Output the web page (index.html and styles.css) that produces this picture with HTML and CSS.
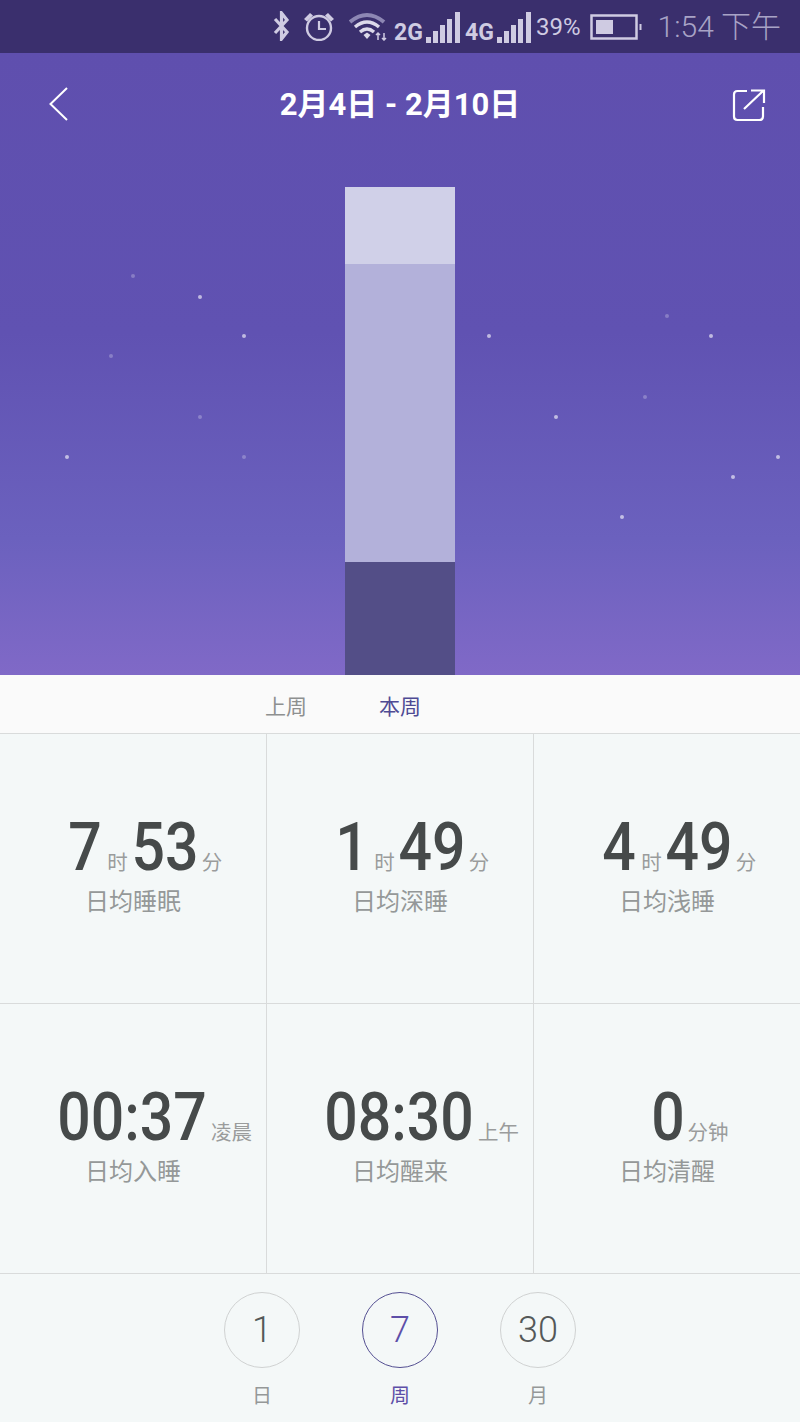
FILE: index.html
```html
<!DOCTYPE html>
<html lang="zh">
<head>
<meta charset="utf-8">
<title>睡眠</title>
<link rel="stylesheet" href="styles.css">
</head>
<body>
<div class="page">
  <div class="statusbar">
    <svg class="ic-bt" width="17" height="30" viewBox="0 0 17 30"><path d="M2 8 L14 21 L8.500 28 L8.500 2 L14 9 L2 22" fill="none" stroke="#cfcbe2" stroke-width="3.200"/></svg>
    <svg class="ic-alarm" width="32" height="29" viewBox="0 0 32 29"><circle cx="16" cy="16" r="12" fill="none" stroke="#cfcbe2" stroke-width="2.400"/><path d="M16 9 V17 H23" fill="none" stroke="#cfcbe2" stroke-width="2.200"/><path d="M1 7 L7 1 L10 3.500 L4 9.500 Z M31 7 L25 1 L22 3.500 L28 9.500 Z" fill="#cfcbe2"/></svg>
    <svg class="ic-wifi" width="40" height="30" viewBox="0 0 40 30"><path d="M1 11 Q18 -3 35 11" fill="none" stroke="#8d87b4" stroke-width="4"/><path d="M6 16 Q18 6 30 16" fill="none" stroke="#dcd9ea" stroke-width="3.400"/><path d="M11 21 Q18 15 25 21" fill="none" stroke="#dcd9ea" stroke-width="3.400"/><path d="M14.500 24 L18 21.500 L21.500 24 L18 28 Z" fill="#dcd9ea"/><path d="M29 22 V29 M27 24 L29 22 L31 24 M35 22 V29 M33 27 L35 29 L37 27" fill="none" stroke="#cfcbe2" stroke-width="1.500"/></svg>
    <span class="net">2G</span>
    <svg class="ic-signal" width="35" height="31" viewBox="0 0 35 31"><path d="M1 25 h5 v6 h-5 z M8 19 h5 v12 h-5 z M15 13 h5 v18 h-5 z M22 7 h5 v24 h-5 z M30 0 h5 v31 h-5 z" fill="#cfcbe2"/></svg>
    <span class="net net-4g">4G</span>
    <svg class="ic-signal" width="35" height="31" viewBox="0 0 35 31"><path d="M1 25 h5 v6 h-5 z M8 19 h5 v12 h-5 z M15 13 h5 v18 h-5 z M22 7 h5 v24 h-5 z M30 0 h5 v31 h-5 z" fill="#cfcbe2"/></svg>
    <span class="pct">39%</span>
    <svg class="ic-batt" width="52" height="26" viewBox="0 0 52 26"><rect x="1.500" y="1.500" width="45" height="23" fill="none" stroke="#cfcbe2" stroke-width="2.500"/><rect x="6" y="6" width="17" height="14" fill="#cfcbe2"/><rect x="49.500" y="10" width="2" height="6" fill="#cfcbe2"/></svg>
    <span class="clock">1:54 下午</span>
  </div>

  <section class="hero">
    <span class="star" style="left:131px;top:221px"></span>
    <span class="star star-b" style="left:198px;top:242px"></span>
    <span class="star" style="left:109px;top:301px"></span>
    <span class="star star-b" style="left:242px;top:281px"></span>
    <span class="star" style="left:198px;top:362px"></span>
    <span class="star star-b" style="left:65px;top:402px"></span>
    <span class="star" style="left:242px;top:402px"></span>
    <span class="star star-b" style="left:487px;top:281px"></span>
    <span class="star" style="left:665px;top:261px"></span>
    <span class="star star-b" style="left:709px;top:281px"></span>
    <span class="star" style="left:643px;top:342px"></span>
    <span class="star star-b" style="left:554px;top:362px"></span>
    <span class="star star-b" style="left:776px;top:402px"></span>
    <span class="star star-b" style="left:731px;top:422px"></span>
    <span class="star star-b" style="left:620px;top:462px"></span>

    <header class="topbar">
      <svg class="back" width="22" height="36" viewBox="0 0 22 36"><path d="M19 2 L2.500 18 L19 34" fill="none" stroke="#fff" stroke-width="2"/></svg>
      <h1 class="title">2月4日 - 2月10日</h1>
      <svg class="share" width="34" height="34" viewBox="0 0 34 34"><path d="M15 3 H5.500 Q2 3 2 6.500 V28.500 Q2 32 5.500 32 H27.500 Q31 32 31 28.500 V19" fill="none" stroke="#fff" stroke-width="2.200"/><path d="M12 21 L31 3 M19 2.500 H32 V15" fill="none" stroke="#fff" stroke-width="2.200"/></svg>
    </header>

    <div class="bar">
      <div class="seg seg-awake"></div>
      <div class="seg seg-light"></div>
      <div class="seg seg-deep"></div>
    </div>
  </section>

  <nav class="tabs">
    <span class="tab">上周</span>
    <span class="tab tab-on">本周</span>
  </nav>

  <section class="stats">
    <div class="cell">
      <div class="value"><b class="n1">7</b><i>时</i><b class="n2">53</b><i class="tail">分</i></div>
      <div class="label">日均睡眠</div>
    </div>
    <div class="cell">
      <div class="value"><b class="n1">1</b><i>时</i><b class="n2">49</b><i class="tail">分</i></div>
      <div class="label">日均深睡</div>
    </div>
    <div class="cell">
      <div class="value"><b class="n1">4</b><i>时</i><b class="n2">49</b><i class="tail">分</i></div>
      <div class="label">日均浅睡</div>
    </div>
    <div class="cell">
      <div class="value"><b class="n5">00:37</b><i class="tail">凌晨</i></div>
      <div class="label">日均入睡</div>
    </div>
    <div class="cell">
      <div class="value"><b class="n5">08:30</b><i class="tail">上午</i></div>
      <div class="label">日均醒来</div>
    </div>
    <div class="cell">
      <div class="value"><b class="n1">0</b><i class="tail">分钟</i></div>
      <div class="label">日均清醒</div>
    </div>
  </section>

  <footer class="ranges">
    <div class="range"><span class="circle">1</span><span class="range-label">日</span></div>
    <div class="range range-on"><span class="circle">7</span><span class="range-label">周</span></div>
    <div class="range"><span class="circle">30</span><span class="range-label">月</span></div>
  </footer>
</div>
</body>
</html>
```

FILE: styles.css
```css
* { box-sizing: border-box; }
html, body { margin: 0; padding: 0; }
body {
  width: 800px;
  height: 1422px;
  overflow: hidden;
  background: #f4f8f8;
  font-family: Roboto, "Noto Sans CJK SC", sans-serif;
}
.page { display: flex; flex-direction: column; width: 800px; height: 1422px; }

/* status bar */
.statusbar {
  height: 53px;
  flex: none;
  background: #3a2f6d;
  color: #cfcbe2;
  display: flex;
  align-items: center;
  padding-left: 273px;
}
.ic-bt { flex: none; margin-top: -1px; }
.ic-alarm { flex: none; margin-left: 13px; margin-top: -1px; }
.ic-wifi { flex: none; margin-left: 14px; margin-top: -1px; }
.net { width: 31px; margin-left: 5px; font-size: 23px; font-weight: 700; line-height: 1; margin-top: 12px; flex: none; white-space: nowrap; }
.ic-signal { flex: none; margin-top: 1px; }
.pct { margin-left: 5px; font-size: 24px; line-height: 1; flex: none; margin-top: 1px; }
.ic-batt { flex: none; margin-left: 9px; }
.clock { margin-left: 16px; font-size: 30px; font-weight: 300; line-height: 1; color: #a8a3c6; white-space: nowrap; flex: none; }

/* hero */
.hero {
  position: relative;
  height: 622px;
  flex: none;
  display: flex;
  flex-direction: column;
  align-items: center;
  background: linear-gradient(#5f4fae 0%, #6052b2 45%, #6b61be 78%, #8069c7 100%);
}
.topbar {
  width: 100%;
  height: 134px;
  flex: none;
  position: relative;
  display: flex;
  justify-content: center;
  padding-top: 32px;
}
.title { margin: 0; font-size: 31px; font-weight: 700; line-height: 40px; color: #fff; white-space: nowrap; }
.back { position: absolute; left: 48px; top: 33px; }
.share { position: absolute; left: 732px; top: 35px; }
.bar { width: 110px; flex: 1; display: flex; flex-direction: column; }
.seg-awake { height: 77px; background: #d0d0e8; }
.seg-light { height: 298px; background: #b3b1da; }
.seg-deep { flex: 1; background: #534e87; }
.star { position: absolute; width: 4px; height: 4px; border-radius: 50%; background: rgba(255,255,255,.25); }
.star-b { background: rgba(255,255,255,.6); }

/* tabs */
.tabs {
  height: 59px;
  flex: none;
  background: #fafafa;
  border-bottom: 1px solid #d9dbdb;
  display: flex;
  justify-content: center;
  align-items: center;
  padding: 2px 114px 0 0;
  font-size: 21px;
  color: #8e9090;
}
.tab { width: 114px; text-align: center; }
.tab-on { color: #4f4a94; }

/* stats */
.stats {
  flex: none;
  display: grid;
  grid-template-columns: 267px 267px 266px;
  grid-template-rows: 270px 270px;
}
.cell {
  border-right: 1px solid #d9dbdb;
  border-bottom: 1px solid #d9dbdb;
  display: flex;
  flex-direction: column;
  align-items: center;
  padding-top: 72px;
}
.cell:nth-child(3n) { border-right: 0; }
.value { display: flex; align-items: baseline; height: 80px; color: #464a4a; }
.value b {
  display: flex;
  justify-content: center;
  flex: none;
  font-size: 67px;
  line-height: 82px;
  font-weight: 500;
  white-space: nowrap;
}
.n1 { width: 36px; transform: translateX(3px) scaleX(.88); }
.n2 { width: 64px; transform: scaleX(.88); }
.n5 { width: 148px; transform: translateX(3px) scaleX(.88); }
.value i { font-style: normal; font-size: 20.500px; color: #9a9c9c; margin: 0 5px 0 7px; white-space: nowrap; }
.value i.tail { width: 0; margin: 0 0 0 5px; }
.value .n5 + i.tail { margin-left: 8px; }
.label { font-size: 24px; line-height: 32px; color: #959898; }

/* ranges */
.ranges {
  flex: 1;
  display: flex;
  justify-content: center;
  gap: 62px;
  padding-top: 18px;
}
.range { display: flex; flex-direction: column; align-items: center; width: 76px; }
.circle {
  width: 76px;
  height: 76px;
  border: 1px solid #d0d2d2;
  border-radius: 50%;
  display: flex;
  align-items: center;
  justify-content: center;
  font-size: 36px;
  font-weight: 300;
  color: #555858;
}
.range-label { margin-top: 14px; font-size: 20px; line-height: 28px; color: #959898; }
.range-on .circle { border-color: #544f92; color: #5d4fa8; }
.range-on .range-label { color: #5d4fa8; }
```
